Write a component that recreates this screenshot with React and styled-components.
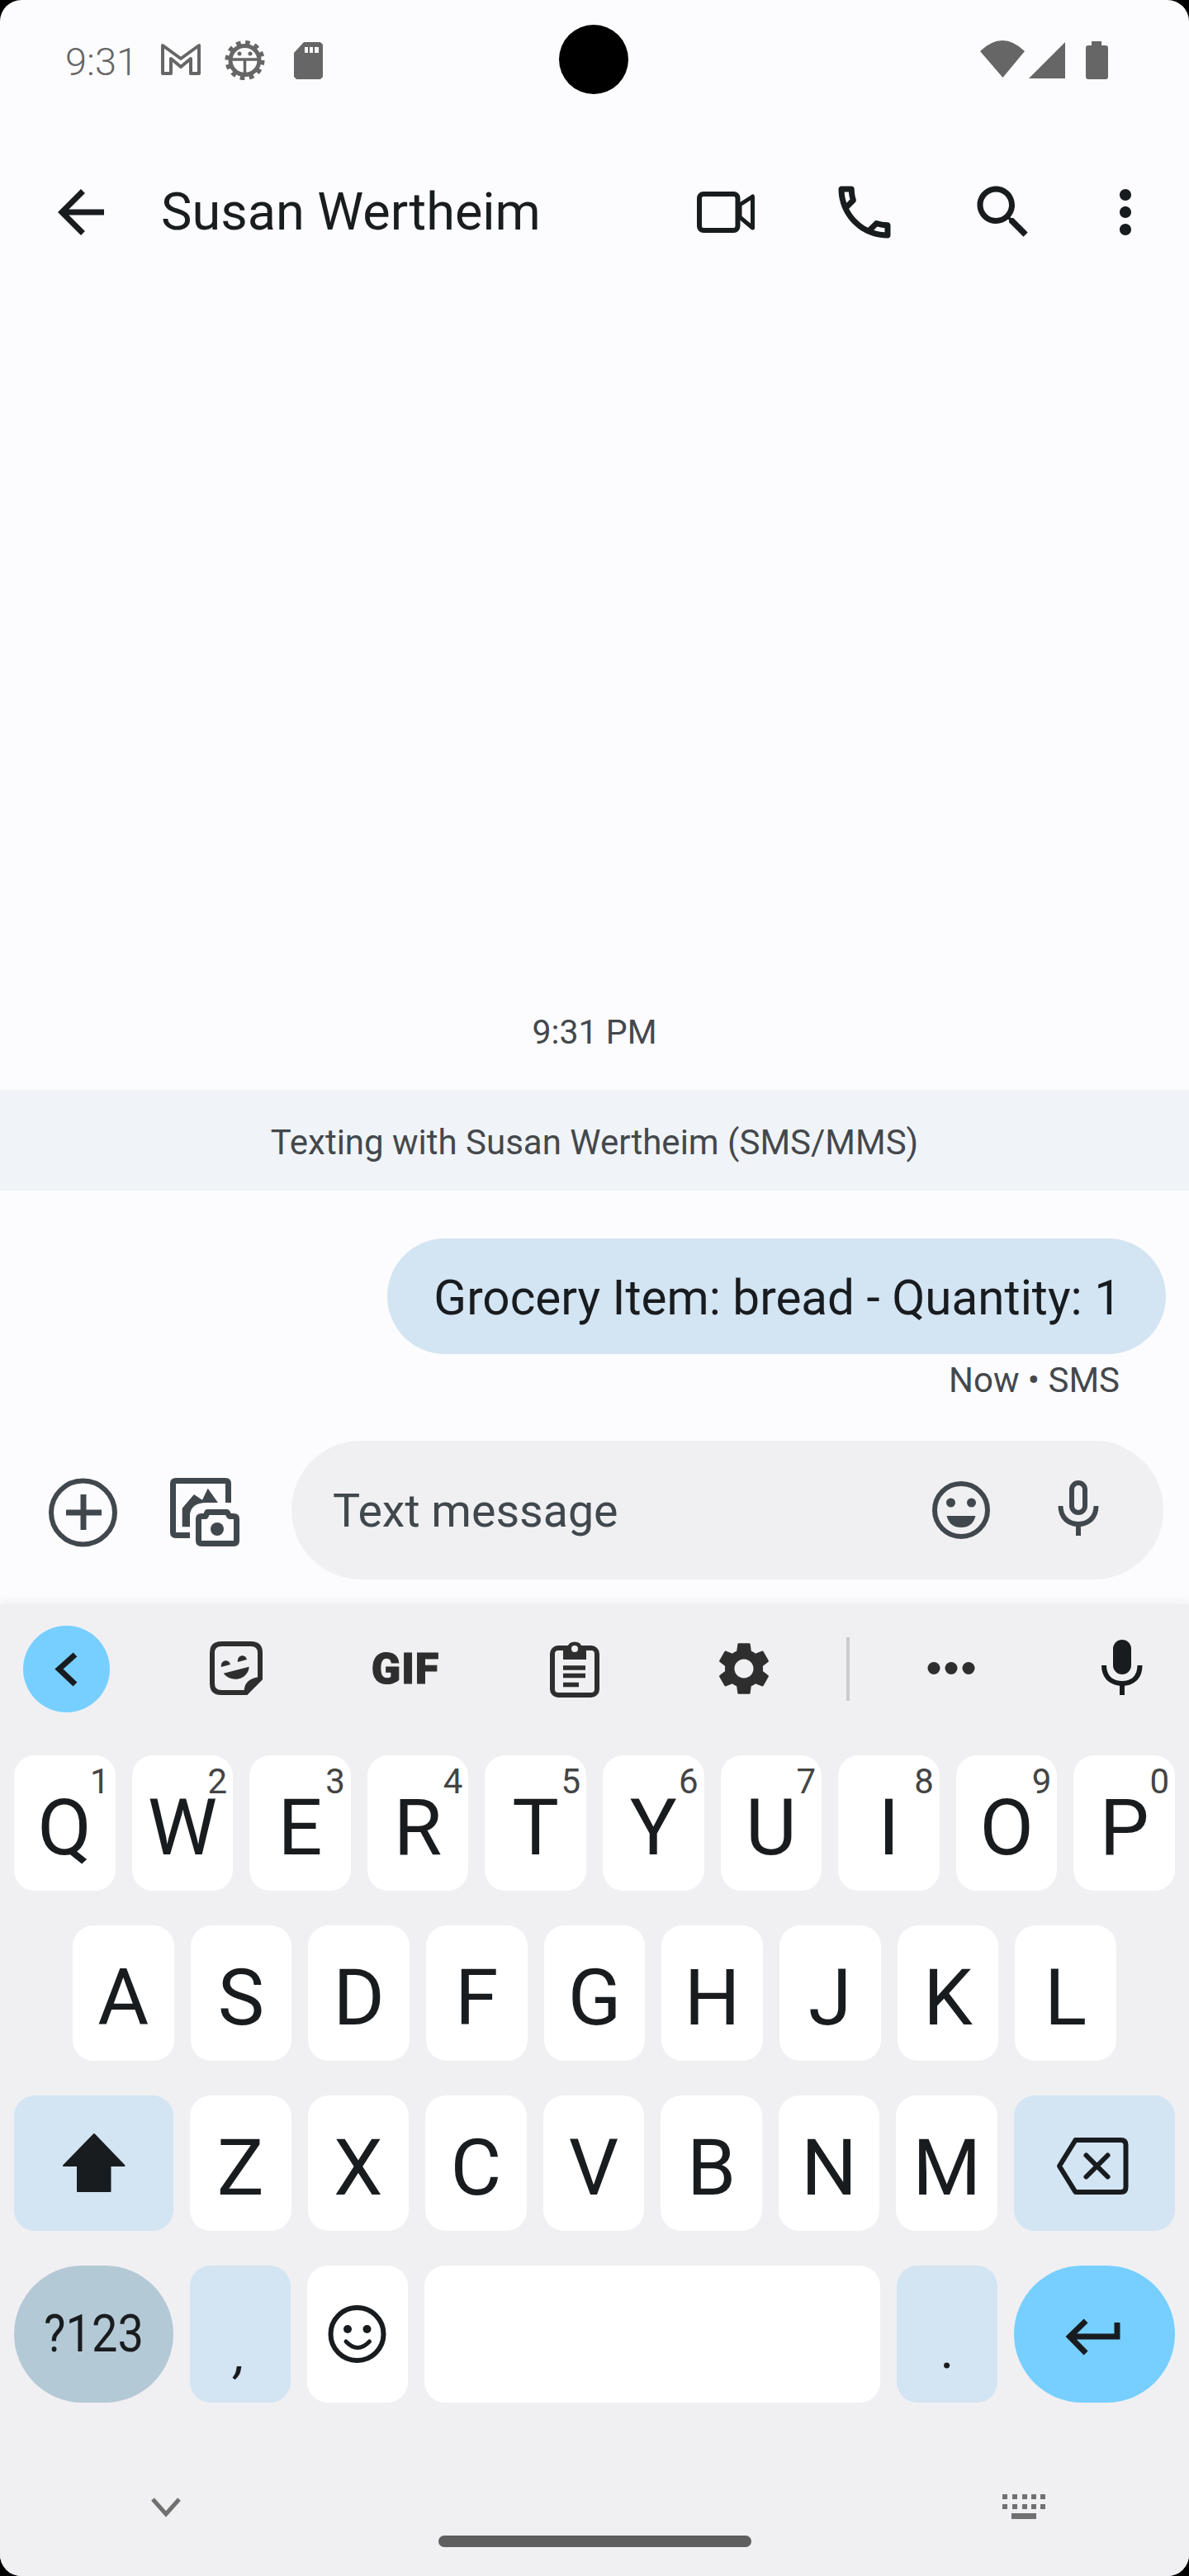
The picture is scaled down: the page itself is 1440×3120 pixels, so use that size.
import React from "react";
import styled, { createGlobalStyle } from "styled-components";

const Global = createGlobalStyle`
  html, body { margin: 0; padding: 0; background: #000; }
  * { box-sizing: border-box; }
  #root { width: 1440px; height: 3120px; }
`;

const Screen = styled.div`
  width: 1440px;
  height: 3120px;
  display: flex;
  flex-direction: column;
  position: relative;
  overflow: hidden;
  border-radius: 26px;
  background: #fcfcfe;
  font-family: Roboto, "Liberation Sans", sans-serif;
`;

const Glyph = styled.svg`
  display: block;
  flex: none;
  width: ${(p) => p.$w}px;
  height: ${(p) => p.$h}px;
`;

const StatusBar = styled.div`
  height: 172px;
  flex: none;
  padding: 48px 90px 0 79px;
  display: flex;
  justify-content: space-between;
  align-items: flex-start;
`;
const StatusLeft = styled.div`
  display: flex;
  align-items: center;
  gap: 18px;
`;
const StatusTime = styled.div`
  width: 93px;
  height: 50px;
  font-size: 47px;
  line-height: 54px;
  font-weight: 300;
  color: #666;
  white-space: nowrap;
`;
const CameraHole = styled.div`
  position: absolute;
  left: 677px;
  top: 30px;
  width: 84px;
  height: 84px;
  border-radius: 50%;
  background: #000;
`;

const Toolbar = styled.div`
  height: 170px;
  flex: none;
  display: flex;
  align-items: center;
  padding: 0 35px 0 56px;
`;
const Title = styled.div`
  flex: 1;
  margin: 0 0 2px 55px;
  font-size: 63px;
  font-weight: 400;
  color: #1a1d20;
  white-space: nowrap;
`;
const Actions = styled.div`
  display: flex;
  gap: 84px;
`;
const OverflowSlot = styled.div`
  margin-left: -20px;
`;

const Thread = styled.div`
  flex: 1;
  display: flex;
  flex-direction: column;
  justify-content: flex-end;
`;
const Stamp = styled.div`
  height: 60px;
  margin-bottom: 40px;
  line-height: 60px;
  text-align: center;
  font-size: 41px;
  color: #44484c;
`;
const Banner = styled.div`
  height: 122px;
  line-height: 128px;
  text-align: center;
  font-size: 42px;
  color: #44484c;
  background: #f0f4f8;
`;
const Bubble = styled.div`
  align-self: flex-end;
  margin: 58px 28px 0 0;
  height: 140px;
  line-height: 144px;
  padding: 0 54px 0 56px;
  border-radius: 70px;
  background: #d3e4f3;
  font-size: 58.4px;
  color: #191c1f;
  white-space: nowrap;
`;
const Meta = styled.div`
  height: 60px;
  line-height: 64px;
  padding-right: 84px;
  text-align: right;
  font-size: 42px;
  color: #44484c;
`;

const Composer = styled.div`
  flex: none;
  height: 243px;
  padding: 45px 31px 30px 50px;
  display: flex;
  align-items: center;
  gap: 50px;
`;
const Pill = styled.div`
  flex: 1;
  height: 168px;
  margin-left: 3px;
  border-radius: 84px;
  background: #f0f0f2;
  display: flex;
  align-items: center;
  gap: 51px;
  padding: 0 58px 0 50px;
`;
const Placeholder = styled.div`
  flex: 1;
  padding-top: 3px;
  font-size: 55.5px;
  color: #41484d;
`;

const Keyboard = styled.div`
  flex: none;
  height: 1177px;
  background: #f0f0f3;
  box-shadow: 0 -5px 8px rgba(240, 240, 243, 0.8);
  display: flex;
  flex-direction: column;
`;
const SuggestRow = styled.div`
  height: 183px;
  flex: none;
  padding: 0 0 27px 28px;
  display: flex;
  align-items: center;
`;
const ExpandButton = styled.div`
  width: 105px;
  height: 105px;
  border-radius: 50%;
  background: #77cfff;
  display: flex;
  align-items: center;
  justify-content: center;
`;
const Slot = styled.div`
  flex: none;
  margin-left: ${(p) => p.$gap}px;
`;
const GifLabel = styled.div`
  width: 100px;
  height: 100px;
  display: flex;
  align-items: center;
  justify-content: center;
  font-size: 52px;
  font-weight: 900;
  color: #2e2e2e;
  letter-spacing: 1px;
  -webkit-text-stroke: 1px #2e2e2e;
`;
const Divider = styled.div`
  width: 4px;
  height: 77px;
  margin-left: 74px;
  background: #cccccc;
`;

const Keys = styled.div`
  padding: 0 17px;
  display: flex;
  flex-direction: column;
  gap: 42px;
`;
const Row = styled.div`
  height: ${(p) => p.$h || 164}px;
  padding: 0 ${(p) => p.$inset || 0}px;
  display: grid;
  grid-template-columns: ${(p) => p.$cols};
  gap: 20px;
`;
const Key = styled.div`
  position: relative;
  display: flex;
  align-items: center;
  justify-content: center;
  padding-top: 10px;
  border-radius: ${(p) => (p.$round ? "83px" : "25px")};
  background: ${(p) => p.$bg || "#ffffff"};
  font-size: 95px;
  font-weight: 400;
  line-height: 1;
  color: #191c1f;
`;
const IconKey = styled(Key)`
  padding-top: 0;
`;
const LabelKey = styled(Key)`
  padding-top: 0;
  font-size: 56px;
`;
const TallLabel = styled.span`
  display: inline-block;
  transform: scaleY(1.12);
`;
const PunctKey = styled(Key)`
  padding: 0 0 ${(p) => p.$drop}px;
  align-items: flex-end;
  font-size: 64px;
  font-style: ${(p) => (p.$slant ? "italic" : "normal")};
`;
const Hint = styled.span`
  position: absolute;
  top: 11px;
  right: 7px;
  font-size: 42px;
  line-height: 42px;
  color: #444;
`;

const NavArea = styled.div`
  flex: none;
  padding-top: 111px;
`;
const NavRow = styled.div`
  height: 30px;
  padding: 0 170px 0 174px;
  display: flex;
  justify-content: space-between;
`;
const HomePill = styled.div`
  width: 379px;
  height: 14px;
  margin: 20px auto 0;
  border-radius: 7px;
  background: #5f5f5f;
`;

const row1 = [["Q", 1], ["W", 2], ["E", 3], ["R", 4], ["T", 5], ["Y", 6], ["U", 7], ["I", 8], ["O", 9], ["P", 0]];
const row2 = "ASDFGHJKL".split("");
const row3 = "ZXCVBNM".split("");
const INK = "#191c1f";
const DARK = "#2e2e2e";
const SLATE = "#41484d";
const GRAY = "#666666";

export default function App() {
  return (
    <Screen>
      <Global />
      <CameraHole />
      <StatusBar>
        <StatusLeft>
          <StatusTime>9:31</StatusTime>
          <Glyph $w={60} $h={50} viewBox="190 48 60 50">
            <path d="M197 55 L219 71 L241 55 V89 H231 V71 L219 81 L207 71 V89 H197 Z" fill="none" stroke={GRAY} strokeWidth="4" strokeLinejoin="round" />
          </Glyph>
          <Glyph $w={60} $h={50} viewBox="268 48 60 50">
            <circle cx="296.5" cy="73" r="17.5" fill="none" stroke={GRAY} strokeWidth="5" />
            <circle cx="296.5" cy="73" r="21.5" fill="none" stroke={GRAY} strokeWidth="5" strokeDasharray="5.6 5.66" />
            <path d="M279 72 H314 M296.5 72 V90" stroke={GRAY} strokeWidth="3.5" />
            <circle cx="290" cy="65" r="2.5" fill={GRAY} />
            <circle cx="303" cy="65" r="2.5" fill={GRAY} />
          </Glyph>
          <Glyph $w={60} $h={50} viewBox="346 48 60 50">
            <path d="M368 51 H388 L391 54 V93 L388 96 H359 L356 93 V64 Z" fill={GRAY} />
            <path d="M369 57 h4 v7 h-4 z M375 57 h4 v7 h-4 z M381 57 h5 v7 h-5 z" fill="#fcfcfe" />
          </Glyph>
        </StatusLeft>
        <Glyph $w={170} $h={50} viewBox="1180 48 170 50">
          <path d="M1187 62 Q1214 36 1241 62 L1214.5 94 Z" fill={GRAY} />
          <path d="M1246 95 L1290 51 V95 Z" fill={GRAY} />
          <path d="M1322 50 H1334 V55 H1339 Q1342 55 1342 58 V93 Q1342 96 1339 96 H1318 Q1315 96 1315 93 V58 Q1315 55 1318 55 H1322 Z" fill={GRAY} />
        </Glyph>
      </StatusBar>

      <Toolbar>
        <Glyph $w={84} $h={84} viewBox="0 0 24 24">
          <path fill={INK} d="M20 11H7.83l5.59-5.59L12 4l-8 8 8 8 1.41-1.41L7.83 13H20v-2z" />
        </Glyph>
        <Title>Susan Wertheim</Title>
        <Actions>
          <Glyph $w={84} $h={84} viewBox="838 215 84 84">
            <rect x="848" y="235" width="46.500" height="44" rx="5" fill="none" stroke={INK} strokeWidth="6" />
            <path d="M897 248 L912.500 238 V276 L897 263 Z" fill="none" stroke={INK} strokeWidth="5" strokeLinejoin="round" />
          </Glyph>
          <Glyph $w={84} $h={84} viewBox="0 0 24 24">
            <path fill={INK} d="M6.54 5c.06.89.21 1.76.45 2.59l-1.2 1.2c-.41-1.2-.67-2.47-.76-3.79h1.51m9.86 12.02c.85.24 1.72.39 2.6.45v1.49c-1.32-.09-2.59-.35-3.8-.75l1.2-1.19M7.5 3H4c-.55 0-1 .45-1 1 0 9.39 7.61 17 17 17 .55 0 1-.45 1-1v-3.49c0-.55-.45-1-1-1-1.24 0-2.45-.2-3.57-.57-.1-.04-.21-.05-.31-.05-.26 0-.51.1-.71.29l-2.2 2.2c-2.83-1.45-5.15-3.76-6.59-6.59l2.2-2.2c.28-.28.36-.67.25-1.02C8.7 6.45 8.5 5.25 8.5 4c0-.55-.45-1-1-1z" />
          </Glyph>
          <Glyph $w={84} $h={84} viewBox="0 0 24 24">
            <path fill={INK} d="M15.5 14h-.79l-.28-.27C15.41 12.59 16 11.11 16 9.5 16 5.91 13.09 3 9.5 3S3 5.91 3 9.5 5.91 16 9.5 16c1.61 0 3.09-.59 4.23-1.57l.27.28v.79l5 4.99L20.49 19l-4.99-5zm-6 0C7.01 14 5 11.99 5 9.5S7.01 5 9.5 5 14 7.01 14 9.5 11.99 14 9.5 14z" />
          </Glyph>
          <OverflowSlot>
            <Glyph $w={84} $h={84} viewBox="0 0 24 24">
              <path fill={INK} d="M12 8c1.1 0 2-.9 2-2s-.9-2-2-2-2 .9-2 2 .9 2 2 2zm0 2c-1.1 0-2 .9-2 2s.9 2 2 2 2-.9 2-2-.9-2-2-2zm0 6c-1.1 0-2 .9-2 2s.9 2 2 2 2-.9 2-2-.9-2-2-2z" />
            </Glyph>
          </OverflowSlot>
        </Actions>
      </Toolbar>

      <Thread>
        <Stamp>9:31 PM</Stamp>
        <Banner>Texting with Susan Wertheim (SMS/MMS)</Banner>
        <Bubble>Grocery Item: bread - Quantity: 1</Bubble>
        <Meta>Now • SMS</Meta>
      </Thread>

      <Composer>
        <Glyph $w={100} $h={100} viewBox="50 1779 100 100">
          <circle cx="100.500" cy="1832" r="38.500" fill="none" stroke={SLATE} strokeWidth="6" />
          <path d="M80 1832 H123 M101 1810 V1853" stroke={SLATE} strokeWidth="7" />
        </Glyph>
        <Glyph $w={100} $h={100} viewBox="200 1779 100 100">
          <path d="M230 1859.500 H213 Q209.500 1859.500 209.500 1856 V1797 Q209.500 1793.500 213 1793.500 H273 Q276.500 1793.500 276.500 1797 V1820" fill="none" stroke={SLATE} strokeWidth="7" />
          <path d="M220.700 1826.700 L235 1810 L245 1816.700 L251.700 1802.700 L264 1820 H250 Q232 1820 230 1834 V1849.300 H220.700 Z" fill={SLATE} />
          <path d="M240.500 1840 Q240.500 1836.500 244 1836.500 H249 L251 1831.500 H275 L278 1836.500 H283 Q286.500 1836.500 286.500 1840 V1866 Q286.500 1869.500 283 1869.500 H244 Q240.500 1869.500 240.500 1866 Z" fill="none" stroke={SLATE} strokeWidth="7" strokeLinejoin="round" />
          <circle cx="263" cy="1852" r="8" fill={SLATE} />
        </Glyph>
        <Pill>
          <Placeholder>Text message</Placeholder>
          <Glyph $w={90} $h={90} viewBox="1120 1784 90 90">
            <circle cx="1164" cy="1829" r="32" fill="none" stroke={SLATE} strokeWidth="6" />
            <circle cx="1151.500" cy="1820" r="5.500" fill={SLATE} />
            <circle cx="1176.500" cy="1820" r="5.500" fill={SLATE} />
            <path d="M1146.500 1836 H1181.500 Q1178 1850 1164 1850 Q1150 1850 1146.500 1836 Z" fill={SLATE} />
          </Glyph>
          <Glyph $w={90} $h={90} viewBox="1261 1784 90 90">
            <rect x="1298" y="1796" width="16" height="36" rx="8" fill="none" stroke={SLATE} strokeWidth="6" />
            <path d="M1284.500 1824 C1284.500 1838 1294 1846 1306 1846 C1318 1846 1327.500 1838 1327.500 1824" fill="none" stroke={SLATE} strokeWidth="6" />
            <path d="M1306 1846 V1860" stroke={SLATE} strokeWidth="6" />
          </Glyph>
        </Pill>
      </Composer>

      <Keyboard>
        <SuggestRow>
          <ExpandButton>
            <Glyph $w={40} $h={50} viewBox="60 1995 40 50">
              <path d="M90 2003 L70.500 2020.500 L90 2039" fill="none" stroke={INK} strokeWidth="7" />
            </Glyph>
          </ExpandButton>
          <Slot $gap={103}>
            <Glyph $w={100} $h={100} viewBox="236 1971 100 100">
              <path d="M268 1991 H304 Q315 1991 315 2002 V2033 L298 2050 H268 Q257 2050 257 2039 V2002 Q257 1991 268 1991 Z" fill="none" stroke={DARK} strokeWidth="6" />
              <path d="M296 2052 C294 2040 301 2031 318 2031 L299 2053 Z" fill={DARK} />
              <path d="M268 2019 A5.500 6 0 0 1 279 2016 Z" fill={DARK} />
              <path d="M288 2013 A5.500 6 0 0 1 299 2010 Z" fill={DARK} />
              <path d="M270.700 2026.700 L301.700 2018.700 C301 2030 290 2036 280 2033 Q274 2031 270.700 2026.700 Z" fill={DARK} />
            </Glyph>
          </Slot>
          <Slot $gap={105}>
            <GifLabel>GIF</GifLabel>
          </Slot>
          <Slot $gap={105}>
            <Glyph $w={100} $h={100} viewBox="646 1971 100 100">
              <rect x="669" y="1996" width="54" height="57" rx="7" fill="none" stroke={DARK} strokeWidth="6" />
              <path d="M682 1995 H687 A9.500 9.500 0 0 1 705 1995 H710 V2010 H682 Z" fill={DARK} />
              <circle cx="696" cy="1997" r="4" fill="#f0f0f3" />
              <path d="M682 2020 H709 M682 2029.500 H709 M682 2040.500 H701" stroke={DARK} strokeWidth="5.500" />
            </Glyph>
          </Slot>
          <Slot $gap={105}>
            <Glyph $w={100} $h={100} viewBox="0 0 31.250 31.250">
              <path transform="translate(3.625 3.625)" fill={DARK} d="M19.14 12.94c.04-.3.06-.61.06-.94 0-.32-.02-.64-.07-.94l2.03-1.58c.18-.14.23-.41.12-.61l-1.92-3.32c-.12-.22-.37-.29-.59-.22l-2.39.96c-.5-.38-1.03-.7-1.62-.94l-.36-2.54c-.04-.24-.24-.41-.48-.41h-3.84c-.24 0-.43.17-.47.41l-.36 2.54c-.59.24-1.13.57-1.62.94l-2.39-.96c-.22-.08-.47 0-.59.22L2.74 8.87c-.12.21-.08.47.12.61l2.03 1.58c-.05.3-.09.63-.09.94s.02.64.07.94l-2.03 1.58c-.18.14-.23.41-.12.61l1.92 3.32c.12.22.37.29.59.22l2.39-.96c.5.38 1.03.7 1.62.94l.36 2.54c.05.24.24.41.48.41h3.84c.24 0 .44-.17.47-.41l.36-2.54c.59-.24 1.13-.56 1.62-.94l2.39.96c.22.08.47 0 .59-.22l1.92-3.32c.12-.22.07-.47-.12-.61l-2.01-1.58zM12 15.6c-1.98 0-3.6-1.62-3.6-3.6s1.62-3.6 3.6-3.6 3.6 1.62 3.6 3.6-1.62 3.6-3.6 3.6z" />
            </Glyph>
          </Slot>
          <Divider />
          <Slot $gap={73}>
            <Glyph $w={100} $h={100} viewBox="1102 1971 100 100">
              <circle cx="1131" cy="2020.500" r="7.500" fill={DARK} />
              <circle cx="1152" cy="2020.500" r="7.500" fill={DARK} />
              <circle cx="1173" cy="2020.500" r="7.500" fill={DARK} />
            </Glyph>
          </Slot>
          <Slot $gap={106}>
            <Glyph $w={100} $h={100} viewBox="1308 1971 100 100">
              <rect x="1348" y="1986" width="22" height="42" rx="11" fill={INK} />
              <path d="M1337 2017 C1337 2032 1347 2039 1359 2039 C1371 2039 1380.500 2032 1380.500 2017" fill="none" stroke={INK} strokeWidth="6" />
              <path d="M1359 2039 V2053" stroke={INK} strokeWidth="6" />
            </Glyph>
          </Slot>
        </SuggestRow>

        <Keys>
          <Row $cols="repeat(10, 1fr)">
            {row1.map(([k, d]) => (
              <Key key={k}>
                {k}
                <Hint>{d}</Hint>
              </Key>
            ))}
          </Row>
          <Row $cols="repeat(9, 1fr)" $inset={71}>
            {row2.map((k) => (
              <Key key={k}>{k}</Key>
            ))}
          </Row>
          <Row $cols="193px repeat(7, 1fr) 195px">
            <IconKey $bg="#d3e4f3">
              <Glyph $w={100} $h={100} viewBox="63.500 2570 100 100">
                <path d="M113.500 2585 L150 2623 H133 V2654 H93.500 V2623 H76.500 Z" fill={INK} stroke={INK} strokeWidth="2" strokeLinejoin="round" />
              </Glyph>
            </IconKey>
            {row3.map((k) => (
              <Key key={k}>{k}</Key>
            ))}
            <IconKey $bg="#d3e4f3">
              <Glyph $w={100} $h={100} viewBox="1275.500 2570 100 100">
                <path d="M1283.500 2623.500 L1303 2592 H1358 Q1364 2592 1364 2598 V2649 Q1364 2655 1358 2655 H1303 Z" fill="none" stroke={INK} strokeWidth="6" strokeLinejoin="round" />
                <path d="M1316 2610.500 L1342 2636.500 M1342 2610.500 L1316 2636.500" stroke={INK} strokeWidth="6" strokeLinecap="round" />
              </Glyph>
            </IconKey>
          </Row>
          <Row $h={166} $cols="193px 122px 122px 1fr 122px 195px">
            <LabelKey $bg="#b4c9d6" $round>
              <TallLabel>?123</TallLabel>
            </LabelKey>
            <PunctKey $bg="#d3e4f3" $drop={26} $slant>,</PunctKey>
            <IconKey>
              <Glyph $w={100} $h={100} viewBox="383 2777 100 100">
                <circle cx="432.500" cy="2827" r="32" fill="none" stroke={INK} strokeWidth="6" />
                <circle cx="421" cy="2821" r="5" fill={INK} />
                <circle cx="444.500" cy="2821" r="5" fill={INK} />
                <path d="M419 2836 Q433 2851 447.500 2836" fill="none" stroke={INK} strokeWidth="5" strokeLinecap="round" />
              </Glyph>
            </IconKey>
            <Key />
            <PunctKey $bg="#d3e4f3" $drop={31}>.</PunctKey>
            <IconKey $bg="#77cfff" $round>
              <Glyph $w={100} $h={100} viewBox="1275.500 2777 100 100">
                <path d="M1314.600 2811 L1295 2830 L1314.600 2850 M1295 2830 H1352.500 V2813" fill="none" stroke={INK} strokeWidth="7" />
              </Glyph>
            </IconKey>
          </Row>
        </Keys>

        <NavArea>
          <NavRow>
            <Glyph $w={54} $h={30} viewBox="174 3021 54 30">
              <path d="M185 3027 L201 3045 L217 3027" fill="none" stroke="#707070" strokeWidth="5" />
            </Glyph>
            <Glyph $w={60} $h={30} viewBox="1210 3021 60 30">
              <path d="M1214 3021 h6 v6 h-6 z M1226 3021 h6 v6 h-6 z M1238 3021 h6 v6 h-6 z M1249 3021 h6 v6 h-6 z M1260 3021 h6 v6 h-6 z M1214 3033 h6 v6 h-6 z M1226 3033 h6 v6 h-6 z M1238 3033 h6 v6 h-6 z M1249 3033 h6 v6 h-6 z M1260 3033 h6 v6 h-6 z M1225 3044 h30 v7 h-30 z" fill="#707070" />
            </Glyph>
          </NavRow>
          <HomePill />
        </NavArea>
      </Keyboard>
    </Screen>
  );
}
